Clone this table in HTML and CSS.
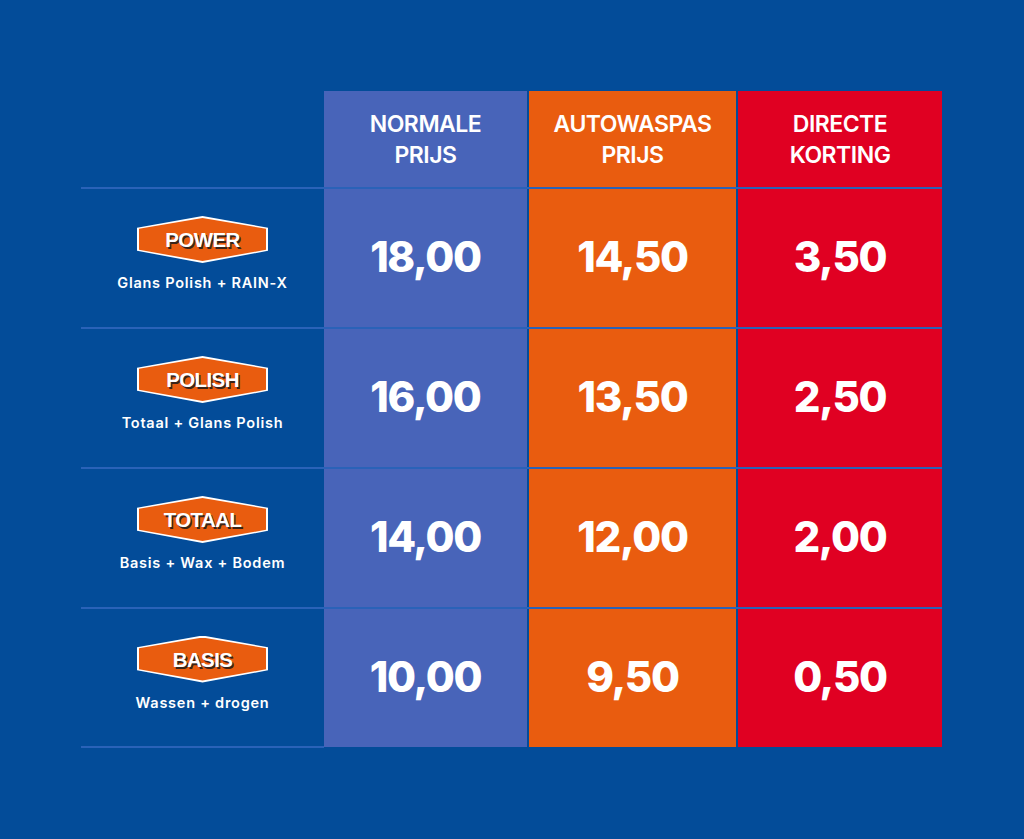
FILE: index.html
```html
<!DOCTYPE html>
<html lang="nl">
<head>
<meta charset="utf-8">
<title>Prijzen autowas</title>
<link rel="stylesheet" href="styles.css">
</head>
<body>
<main class="page">
  <div class="table">
    <div class="row head">
      <div class="label"></div>
      <div class="cell c1"><span>NORMALE<br>PRIJS</span></div>
      <div class="cell c2"><span>AUTOWASPAS<br>PRIJS</span></div>
      <div class="cell c3"><span>DIRECTE<br>KORTING</span></div>
    </div>
    <div class="row body">
      <div class="label">
        <div class="badge"><div class="badge-in">POWER</div></div>
        <div class="sub">Glans Polish + RAIN-X</div>
      </div>
      <div class="cell c1 num">18,00</div>
      <div class="cell c2 num">14,50</div>
      <div class="cell c3 num">3,50</div>
    </div>
    <div class="row body">
      <div class="label">
        <div class="badge"><div class="badge-in">POLISH</div></div>
        <div class="sub">Totaal + Glans Polish</div>
      </div>
      <div class="cell c1 num">16,00</div>
      <div class="cell c2 num">13,50</div>
      <div class="cell c3 num">2,50</div>
    </div>
    <div class="row body">
      <div class="label">
        <div class="badge"><div class="badge-in">TOTAAL</div></div>
        <div class="sub">Basis + Wax + Bodem</div>
      </div>
      <div class="cell c1 num">14,00</div>
      <div class="cell c2 num">12,00</div>
      <div class="cell c3 num">2,00</div>
    </div>
    <div class="row body last">
      <div class="label">
        <div class="badge"><div class="badge-in">BASIS</div></div>
        <div class="sub">Wassen + drogen</div>
      </div>
      <div class="cell c1 num">10,00</div>
      <div class="cell c2 num">9,50</div>
      <div class="cell c3 num">0,50</div>
    </div>
  </div>
</main>
</body>
</html>
```

FILE: styles.css
```css
html, body {
  margin: 0;
  padding: 0;
}
body {
  background: #034c99;
  font-family: Inter, "Open Sans", sans-serif;
  color: #ffffff;
  width: 1024px;
  height: 839px;
  overflow: hidden;
}
.page {
  padding: 91px 0 0 81px;
}
.table {
  width: 861px;
  display: flex;
  flex-direction: column;
}
.row {
  display: grid;
  grid-template-columns: 243px 203px 209px 206px;
}
.row .c2 { margin-left: 2px; }
.row .c3 { margin-left: 2px; }
.row.head {
  height: 96px;
}
.row.body {
  height: 138px;
  border-top: 2px solid #2a62b8;
}
.row.last .label {
  border-bottom: 2px solid #2a62b8;
  margin-bottom: -1px;
}
.cell {
  display: flex;
  align-items: center;
  justify-content: center;
  text-align: center;
}
.c1 { background: #4864b9; }
.c2 { background: #e95c0f; }
.c3 { background: #e00022; }
.head .cell span {
  font-size: 23px;
  font-weight: 600;
  line-height: 31px;
  letter-spacing: -0.5px;
  padding-top: 2px;
}
.num {
  font-size: 42px;
  font-weight: 800;
  letter-spacing: -1.3px;
  padding-bottom: 4px;
}
.label {
  display: flex;
  flex-direction: column;
  align-items: center;
  justify-content: center;
  padding-bottom: 8px;
}
.head .label { padding: 0; }
.badge {
  width: 131px;
  height: 47px;
  background: #ffffff;
  clip-path: polygon(0 25%, 50% 0, 100% 25%, 100% 74%, 50% 100%, 0 74%);
  display: flex;
}
.badge-in {
  flex: 1;
  margin: 2px;
  background: #e95c0f;
  clip-path: polygon(0 25%, 50% 0, 100% 25%, 100% 74%, 50% 100%, 0 74%);
  display: flex;
  align-items: center;
  justify-content: center;
  font-family: "Liberation Sans", Arial, sans-serif;
  font-weight: 700;
  font-size: 20.5px;
  letter-spacing: -0.6px;
  color: #ffffff;
  text-shadow: 1.5px 1.5px 0 #3a2418;
  padding-top: 1px;
}
.sub {
  margin-top: 11px;
  font-size: 14.5px;
  font-weight: 600;
  letter-spacing: 0.75px;
  line-height: 18px;
}
```
